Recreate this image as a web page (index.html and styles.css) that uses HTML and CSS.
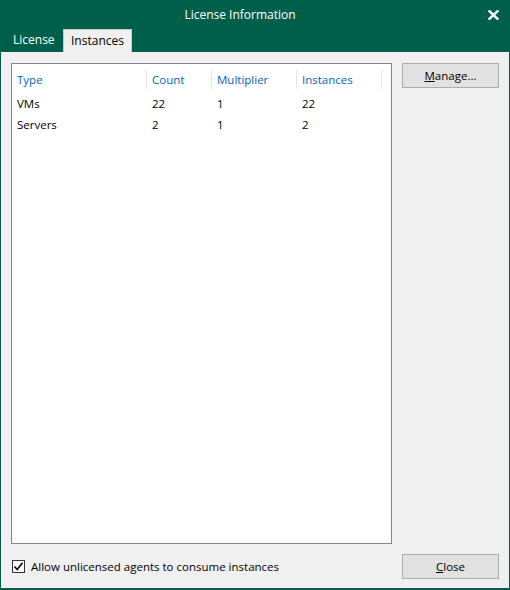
FILE: index.html
```html
<!DOCTYPE html>
<html>
<head>
<meta charset="utf-8">
<link rel="stylesheet" href="styles.css">
</head>
<body>
<div class="window">
  <div class="titlebar">
    <span class="title">License Information</span>
    <span class="close-x">
      <svg width="11" height="10" viewBox="0 0 11 10"><path d="M1.5 1.2 L9.5 8.8 M9.5 1.2 L1.5 8.8" stroke="#fff" stroke-width="2.4" stroke-linecap="square"/></svg>
    </span>
  </div>
  <div class="tabs">
    <div class="tab">License</div>
    <div class="tab active">Instances</div>
  </div>
  <div class="content">
    <div class="main">
      <div class="list">
        <div class="row head">
          <div class="cell c1">Type</div>
          <div class="cell c2">Count</div>
          <div class="cell c3">Multiplier</div>
          <div class="cell c4">Instances</div>
        </div>
        <div class="row">
          <div class="cell c1">VMs</div>
          <div class="cell c2">22</div>
          <div class="cell c3">1</div>
          <div class="cell c4">22</div>
        </div>
        <div class="row">
          <div class="cell c1">Servers</div>
          <div class="cell c2">2</div>
          <div class="cell c3">1</div>
          <div class="cell c4">2</div>
        </div>
      </div>
      <div class="side">
        <button class="btn"><u>M</u>anage...</button>
      </div>
    </div>
    <div class="footer">
      <label class="check">
        <span class="box">
          <svg width="11" height="11" viewBox="0 0 11 11"><path d="M1.5 5.5 L4.2 8.5 L9.5 1.8" fill="none" stroke="#000" stroke-width="1.6"/></svg>
        </span>
        <span>Allow unlicensed agents to consume instances</span>
      </label>
      <button class="btn"><u>C</u>lose</button>
    </div>
  </div>
</div>
</body>
</html>
```

FILE: styles.css
```css
html, body {
  margin: 0;
  padding: 0;
}
body {
  width: 510px;
  height: 590px;
  font-family: "Open Sans", "Noto Sans", sans-serif;
  font-size: 11.5px;
  color: #000;
}
.window {
  width: 510px;
  height: 590px;
  box-sizing: border-box;
  background: #005f4b;
  display: flex;
  flex-direction: column;
  padding: 0 1px 2px 1px;
}
.titlebar {
  height: 29px;
  display: flex;
  align-items: center;
  justify-content: center;
  position: relative;
  color: #fff;
  font-size: 12px;
  padding-right: 30px;
}
.close-x {
  position: absolute;
  right: 10px;
  top: 10px;
  width: 11px;
  height: 10px;
  display: block;
}
.close-x svg { display: block; }
.tabs {
  height: 23px;
  display: flex;
  align-items: flex-end;
  padding-left: 2px;
}
.tab {
  height: 23px;
  box-sizing: border-box;
  padding: 0 0 0 10px;
  width: 60px;
  line-height: 22px;
  color: #fff;
  font-size: 12px;
}
.tab.active {
  background: #f0f0f0;
  color: #000;
  border: 1px solid #c8c8c8;
  border-bottom: none;
  padding: 0;
  width: 69px;
  text-align: center;
}
.content {
  flex: 1;
  background: #f0f0f0;
  padding: 11px 10px 9px 10px;
  display: flex;
  flex-direction: column;
}
.main {
  display: flex;
  gap: 10px;
  height: 481px;
}
.list {
  width: 381px;
  box-sizing: border-box;
  border: 1px solid #828790;
  background: #fff;
  padding-top: 6px;
}
.row {
  display: flex;
  height: 21px;
  align-items: center;
}
.row.head {
  height: 19px;
  margin-bottom: 4px;
  color: #0066b4;
}
.cell {
  box-sizing: border-box;
  padding-left: 5px;
  height: 100%;
  display: flex;
  align-items: center;
}
.row.head .cell {
  border-right: 1px solid #e5e5e5;
}
.c1 { width: 135px; }
.c2 { width: 65px; }
.c3 { width: 85px; }
.c4 { width: 85px; }
.side {
  width: 97px;
}
.btn {
  width: 97px;
  height: 25px;
  box-sizing: border-box;
  background: #e1e1e1;
  border: 1px solid #adadad;
  font-family: "Open Sans", "Noto Sans", sans-serif;
  font-size: 11.5px;
  color: #000;
  padding: 0;
  margin: 0;
}
.footer {
  margin-top: 10px;
  display: flex;
  justify-content: space-between;
  align-items: center;
  height: 25px;
}
.check {
  display: flex;
  align-items: center;
  gap: 6px;
  padding-left: 1px;
}
.box {
  width: 13px;
  height: 13px;
  box-sizing: border-box;
  border: 1px solid #333;
  background: #fff;
  display: flex;
  align-items: center;
  justify-content: center;
}
.box svg { display: block; }
```
